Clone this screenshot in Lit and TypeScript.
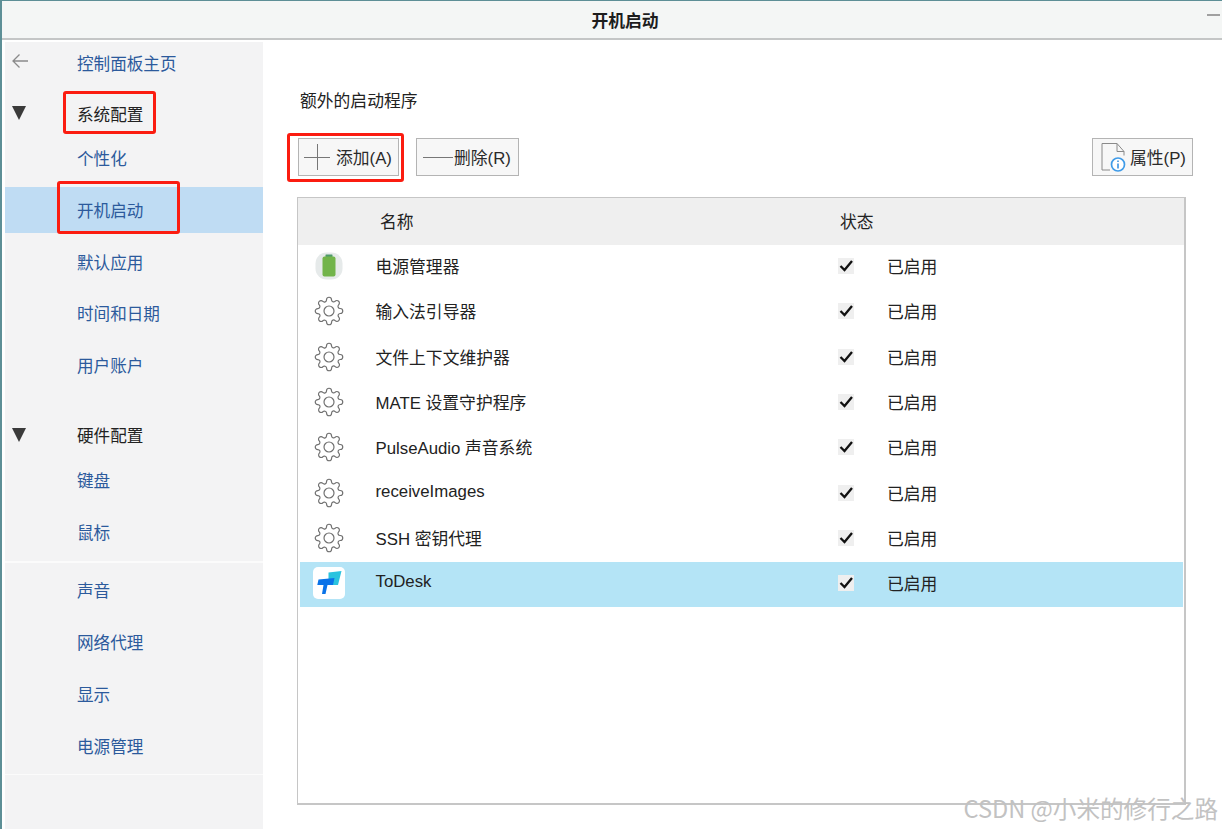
import { LitElement, html, css, svg } from "lit";
import { customElement } from "lit/decorators.js";

const gear = svg`<svg class="ico" viewBox="0 0 24 24" width="30" height="30" fill="none" stroke="#707070" stroke-width="0.95" stroke-linejoin="round"><circle cx="12" cy="12" r="4"/><path d="M19.4 15a1.65 1.65 0 0 0 .33 1.82l.06.06a2 2 0 0 1 0 2.83 2 2 0 0 1-2.83 0l-.06-.06a1.65 1.65 0 0 0-1.82-.33 1.65 1.65 0 0 0-1 1.51V21a2 2 0 0 1-2 2 2 2 0 0 1-2-2v-.09A1.65 1.65 0 0 0 9 19.4a1.65 1.65 0 0 0-1.82.33l-.06.06a2 2 0 0 1-2.83 0 2 2 0 0 1 0-2.83l.06-.06a1.65 1.65 0 0 0 .33-1.82 1.65 1.65 0 0 0-1.51-1H3a2 2 0 0 1-2-2 2 2 0 0 1 2-2h.09A1.65 1.65 0 0 0 4.6 9a1.65 1.65 0 0 0-.33-1.82l-.06-.06a2 2 0 0 1 0-2.83 2 2 0 0 1 2.83 0l.06.06a1.65 1.65 0 0 0 1.82.33H9a1.65 1.65 0 0 0 1-1.51V3a2 2 0 0 1 2-2 2 2 0 0 1 2 2v.09a1.65 1.65 0 0 0 1 1.51 1.65 1.65 0 0 0 1.82-.33l.06-.06a2 2 0 0 1 2.83 0 2 2 0 0 1 0 2.83l-.06.06a1.65 1.65 0 0 0-.33 1.82V9a1.65 1.65 0 0 0 1.51 1H21a2 2 0 0 1 2 2 2 2 0 0 1-2 2h-.09a1.65 1.65 0 0 0-1.51 1z"/></svg>`;

const battery = svg`<svg class="ico" viewBox="0 0 28 28" width="28" height="28"><rect x="0.500" y="0.500" width="27" height="27" rx="11" fill="#e6eaea"/><rect x="10.500" y="2.500" width="7" height="3" rx="0.500" fill="#4f9a6a"/><rect x="7.500" y="4.500" width="13" height="20" rx="2" fill="#72b44a"/></svg>`;

const todesk = svg`<svg class="ico" viewBox="0 0 32 32" width="32" height="32"><rect width="32" height="32" rx="5" fill="#fff"/><path d="M15.500 5.500L28.500 4 25 18h-6.500l1-5.500-4 .3z" fill="#2bc3df"/><path d="M5.500 12.500L21.500 11 20 18h-5.500l-2 9H9l1.500-9H4.300z" fill="#0a73e8"/></svg>`;

const info = svg`<svg viewBox="0 0 26 30" width="26" height="30" fill="none"><path d="M17 1.500H2V28h8M17 1.500l7 8v4M17 1.500v8h7" stroke="#8a8a8a" stroke-width="1"/><circle cx="18" cy="22.500" r="6.500" fill="#fff" stroke="#3f9be8" stroke-width="1.700"/><path d="M18 21.500v5M18 18.500v1.500" stroke="#2d8ae0" stroke-width="1.500"/></svg>`;

const rows = [
  { name: "电源管理器", icon: battery },
  { name: "输入法引导器", icon: gear },
  { name: "文件上下文维护器", icon: gear },
  { name: "MATE 设置守护程序", icon: gear },
  { name: "PulseAudio 声音系统", icon: gear },
  { name: "receiveImages", icon: gear, raised: "r2" },
  { name: "SSH 密钥代理", icon: gear },
  { name: "ToDesk", icon: todesk, selected: true, raised: "r3" },
];

@customElement("app-root")
export class AppRoot extends LitElement {
  static styles = css`
    :host {
      display: block;
      position: relative;
      width: 1222px;
      height: 829px;
      overflow: hidden;
      background: #fff;
      font-family: "Liberation Sans", "Noto Sans CJK SC", sans-serif;
      font-size: 16.8px;
      color: #222;
    }
    .window {
      height: 829px;
      display: flex;
      flex-direction: column;
      border-left: 2px solid #5d8f96;
      border-top: 1px solid #5d8f96;
      box-sizing: border-box;
    }
    .titlebar {
      height: 37px;
      flex: none;
      display: flex;
      align-items: center;
      justify-content: center;
      padding-left: 26px;
      background: #f4f6f5;
      border-bottom: 2px solid #c4c6c6;
      font-weight: 700;
      font-size: 16.8px;
      color: #1d1d1d;
      position: relative;
    }
    .min {
      position: absolute;
      right: 2px;
      top: 13px;
      width: 13px;
      height: 2px;
      background: #a0a0a0;
    }
    .body {
      flex: 1;
      display: flex;
      padding: 2px 0 0 3px;
      min-height: 0;
    }
    .side {
      width: 258px;
      flex: none;
      background: #f3f3f4;
      display: flex;
      flex-direction: column;
      position: relative;
      font-size: 16.6px;
    }
    .home, .item, .group {
      display: flex;
      align-items: center;
      padding-left: 72px;
      color: #2c5a9c;
      flex: none;
    }
    .home { height: 41px; }
    .back { position: absolute; left: 6px; top: 11px; }
    .group {
      height: 43px;
      color: #222;
      position: relative;
      margin-top: 9px;
    }
    .group.second { margin-top: 20px; }
    .group::before {
      content: "";
      position: absolute;
      left: 7px;
      top: 14px;
      border-left: 7px solid transparent;
      border-right: 7px solid transparent;
      border-top: 14px solid #3a3a3a;
    }
    .group.second::before { top: 14px; }
    .item { height: 46px; margin-bottom: 5.75px; }
    .item.sel { background: #bfdcf3; }
    .rule { height: 2px; background: #fbfbfb; flex: none; }
    .rule.a { margin: 1px 0 4px; }
    .rule.b { height: 1px; }
    .main {
      flex: 1;
      min-width: 0;
      display: flex;
      flex-direction: column;
      padding: 47px 29px 24px 34px;
    }
    .heading { height: 26px; line-height: 26px; padding-left: 3px; color: #222; }
    .tools { display: flex; gap: 17px; margin-top: 23px; padding-left: 1px; }
    .btn {
      height: 38px;
      box-sizing: border-box;
      border: 1px solid #b4b4b4;
      background: #f7f7f7;
      display: flex;
      align-items: center;
      color: #2a2a2a;
    }
    .btn.add { width: 101px; padding-left: 5px; gap: 6px; }
    .btn.del { width: 103px; padding-left: 6px; gap: 1px; }
    .btn.prop { width: 101px; margin-left: auto; padding-left: 7px; gap: 4px; }
    .table {
      margin-top: 21px;
      flex: 1;
      border: 1px solid #c6c6c6;
      border-width: 1px 2px 2px 1px;
      padding: 0 1px 0 2px;
      margin-right: 7px;
      box-sizing: border-box;
      min-height: 0;
    }
    .head {
      height: 47px;
      margin: 0 -1px 0 -2px;
      background: #efefef;
      display: grid;
      grid-template-columns: 82px 460px 1fr;
      align-items: center;
      color: #222;
      padding-bottom: 2px;
      box-sizing: border-box;
    }
    .head span:nth-child(2) { grid-column: 2; }
    .row {
      height: 45.3px;
      box-sizing: border-box;
      padding-bottom: 3px;
      display: grid;
      grid-template-columns: 75.5px 462.5px 49px 1fr;
      align-items: center;
      color: #222;
    }
    .row.sel { background: #b4e4f6; }
    .cell-ico { width: 58px; display: flex; justify-content: center; }
    .ico { display: block; }
    .r2 { padding-bottom: 1px; }
    .r3 { padding-bottom: 2px; }
    .cb {
      width: 16px;
      height: 16px;
      background: #efefef;
      display: block;
    }
    .wm {
      position: absolute;
      right: 4px;
      bottom: 6px;
      font-family: "Noto Sans CJK SC", sans-serif;
      font-size: 23.600px;
      line-height: 30px;
      color: #c2c2c2;
      white-space: nowrap;
    }
    .box { position: absolute; box-sizing: border-box; border: 3px solid #fb1c10; border-radius: 3px; }
    .b1 { left: 63px; top: 91px; width: 93px; height: 43px; }
    .b2 { left: 57px; top: 181px; width: 123px; height: 53px; }
    .b3 { left: 287px; top: 133px; width: 117px; height: 49px; }
  `;

  render() {
    const check = svg`<svg class="cb" viewBox="0 0 16 16"><path d="M2.500 8l4 4 7.500-9" fill="none" stroke="#111" stroke-width="2.300"/></svg>`;
    return html`
      <div class="window">
        <div class="titlebar">开机启动<i class="min"></i></div>
        <div class="body">
          <nav class="side">
            <svg class="back" width="18" height="16" viewBox="0 0 18 16" fill="none" stroke="#8a8a8a" stroke-width="1.300"><path d="M17 8H2M8.500 1.500L2 8l6.500 6.500"/></svg>
            <div class="home">控制面板主页</div>
            <div class="group">系统配置</div>
            <div class="item">个性化</div>
            <div class="item sel">开机启动</div>
            <div class="item">默认应用</div>
            <div class="item">时间和日期</div>
            <div class="item">用户账户</div>
            <div class="group second">硬件配置</div>
            <div class="item">键盘</div>
            <div class="item">鼠标</div>
            <div class="rule a"></div>
            <div class="item">声音</div>
            <div class="item">网络代理</div>
            <div class="item">显示</div>
            <div class="item">电源管理</div>
            <div class="rule b"></div>
          </nav>
          <main class="main">
            <div class="heading">额外的启动程序</div>
            <div class="tools">
              <div class="btn add">
                <svg width="26" height="26" viewBox="0 0 26 26" stroke="#777" stroke-width="1"><path d="M0 13.500h26M13.500 0v26"/></svg>
                添加(A)
              </div>
              <div class="btn del">
                <svg width="30" height="4" viewBox="0 0 30 4" stroke="#777" stroke-width="1"><path d="M0 2.500h30"/></svg>
                删除(R)
              </div>
              <div class="btn prop">${info}属性(P)</div>
            </div>
            <div class="table">
              <div class="head"><span></span><span>名称</span><span>状态</span></div>
              ${rows.map(
                (r) => html`
                  <div class="row ${r.selected ? "sel" : ""}">
                    <div class="cell-ico">${r.icon}</div>
                    <div class="${r.raised ?? ""}">${r.name}</div>
                    <div>${check}</div>
                    <div>已启用</div>
                  </div>
                `
              )}
            </div>
          </main>
        </div>
      </div>
      <div class="box b1"></div>
      <div class="box b2"></div>
      <div class="box b3"></div>
      <div class="wm">CSDN @小米的修行之路</div>
    `;
  }
}
